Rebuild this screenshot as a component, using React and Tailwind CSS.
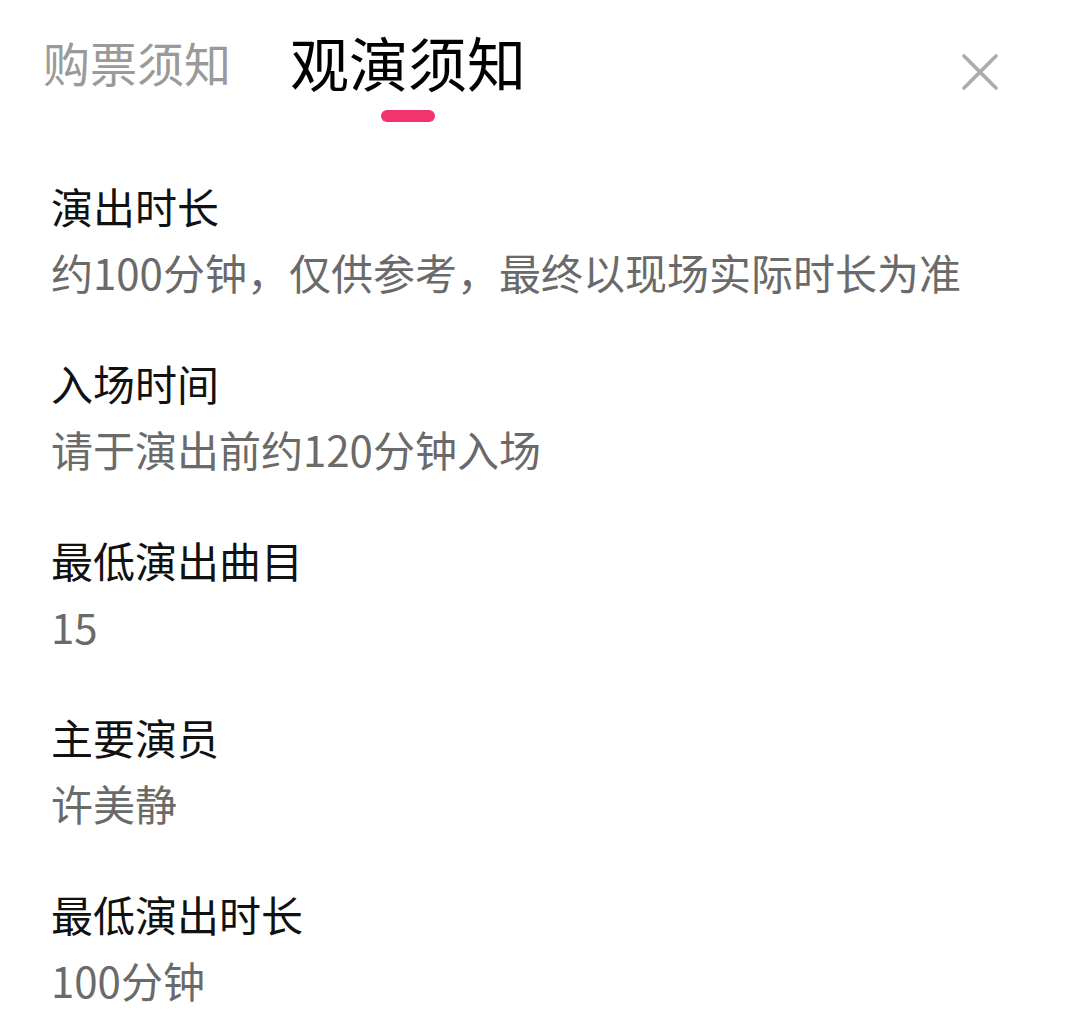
const items = [
  { title: '演出时长', value: '约100分钟，仅供参考，最终以现场实际时长为准' },
  { title: '入场时间', value: '请于演出前约120分钟入场' },
  { title: '最低演出曲目', value: '15' },
  { title: '主要演员', value: '许美静' },
  { title: '最低演出时长', value: '100分钟' },
];

function CloseIcon() {
  return (
    <svg width="38" height="38" viewBox="0 0 38 38" className="block">
      <path d="M3 3 L35 35 M35 3 L3 35" stroke="#ababab" strokeWidth="3.6" strokeLinecap="round" fill="none" />
    </svg>
  );
}

export default function App() {
  return (
    <div className="w-[1068px] h-[1029px] overflow-hidden bg-white font-['Noto_Sans_CJK_SC','Noto_Sans',sans-serif]">
      <div className="flex items-start pl-[43px] pt-[32px] pr-[69px]">
        <div className="mt-[6px] text-[47px] leading-[47px] text-[#9a9a9a]">购票须知</div>
        <div className="ml-[59px] flex flex-col items-center">
          <div className="text-[59px] leading-[59px] text-black">观演须知</div>
          <div className="mt-[19px] w-[54px] h-[12px] rounded-full bg-[#f2346c]" />
        </div>
        <div className="ml-auto mt-[21px]">
          <CloseIcon />
        </div>
      </div>

      <div className="mt-[51px] pl-[51px] flex flex-col gap-[45px]">
        {items.map((it) => (
          <div key={it.title}>
            <div className="text-[42px] leading-[66px] text-[#111111]">{it.title}</div>
            <div className="text-[42px] leading-[66px] text-[#6a6a6a]">{it.value}</div>
          </div>
        ))}
      </div>
    </div>
  );
}
